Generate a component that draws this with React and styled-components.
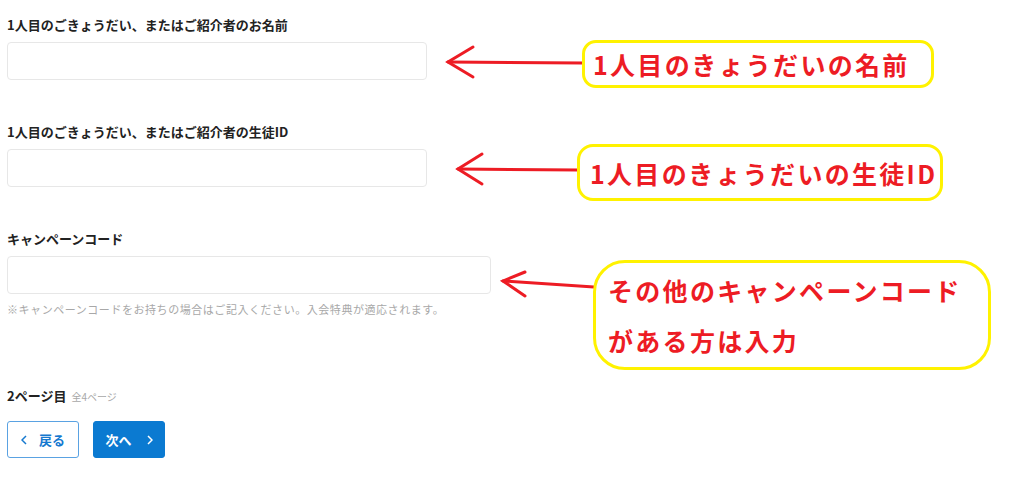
import React from 'react';
import styled, { createGlobalStyle } from 'styled-components';

const GlobalStyle = createGlobalStyle`
  html, body {
    margin: 0;
    padding: 0;
    background: #fff;
  }
  body {
    font-family: "Noto Sans CJK JP", "Noto Sans", sans-serif;
    color: #222;
  }
`;

const Page = styled.div`
  position: relative;
  width: 1024px;
  height: 481px;
  box-sizing: border-box;
  padding: 15px 0 0 7px;
  overflow: hidden;
`;

const Form = styled.form`
  display: flex;
  flex-direction: column;
  align-items: flex-start;
`;

const Field = styled.div`
  display: flex;
  flex-direction: column;
  margin-bottom: ${p => p.$gap ?? 42}px;
`;

const Label = styled.label`
  font-size: 13px;
  font-weight: 700;
  line-height: 20px;
  color: #222;
  margin-bottom: 7px;
`;

const Input = styled.input`
  width: ${p => p.$w}px;
  height: 38px;
  box-sizing: border-box;
  border: 1px solid #e7e7e7;
  border-radius: 4px;
  background: #fff;
  outline: none;
  padding: 0 10px;
`;

const Help = styled.p`
  margin: 7px 0 0;
  font-size: 11px;
  letter-spacing: 0.55px;
  line-height: 16px;
  color: #a8a8a8;
`;

const PageInfo = styled.div`
  margin-top: 69px;
  display: flex;
  align-items: baseline;
  gap: 5px;
`;

const PageNow = styled.span`
  font-size: 13px;
  font-weight: 700;
  color: #222;
  line-height: 20px;
`;

const PageAll = styled.span`
  font-size: 10px;
  color: #a8a8a8;
`;

const ButtonRow = styled.div`
  display: flex;
  gap: 14px;
  margin-top: 15px;
`;

const NavButton = styled.button`
  width: 72px;
  height: 37px;
  box-sizing: border-box;
  border-radius: 3px;
  border: 1px solid ${p => (p.$primary ? '#0b7ad1' : '#5aa2e2')};
  background: ${p => (p.$primary ? '#0b7ad1' : '#fff')};
  color: ${p => (p.$primary ? '#fff' : '#1679cf')};
  font-family: inherit;
  font-size: 13px;
  font-weight: 700;
  display: flex;
  align-items: center;
  justify-content: center;
  gap: ${p => (p.$primary ? 15 : 12)}px;
  padding: 0;
  cursor: pointer;
`;

const Chevron = ({ dir }) => (
  <svg width="6" height="10" viewBox="0 0 6 10">
    <path
      d={dir === 'left' ? 'M5 1 L1 5 L5 9' : 'M1 1 L5 5 L1 9'}
      fill="none"
      stroke="currentColor"
      strokeWidth="1.5"
    />
  </svg>
);

/* annotations drawn over the form */
const Overlay = styled.div`
  position: absolute;
  inset: 0;
  pointer-events: none;
`;

const Arrows = styled.svg`
  position: absolute;
  left: 0;
  top: 0;
`;

const Callout = styled.div`
  position: absolute;
  left: ${p => p.$x}px;
  top: ${p => p.$y}px;
  width: ${p => p.$w}px;
  height: ${p => p.$h}px;
  box-sizing: border-box;
  border: 3px solid #fff200;
  border-radius: ${p => p.$r}px;
  padding-left: ${p => p.$pad}px;
  display: flex;
  flex-direction: column;
  justify-content: center;
  color: #ed1c24;
  font-size: 25px;
  font-weight: 700;
  letter-spacing: 2.3px;
  line-height: ${p => p.$lh || 30}px;
  white-space: nowrap;
`;

const arrows = [
  { tip: [448, 62], end: [583, 63], up: [473, 47], down: [473, 77] },
  { tip: [458, 169], end: [578, 170], up: [482, 154], down: [482, 184] },
  { tip: [503, 281], end: [594, 287], up: [525, 272], down: [525, 296] },
];

export default function App() {
  return (
    <Page>
      <GlobalStyle />
      <Form onSubmit={e => e.preventDefault()}>
        <Field>
          <Label>1人目のごきょうだい、またはご紹介者のお名前</Label>
          <Input $w={420} />
        </Field>
        <Field>
          <Label>1人目のごきょうだい、またはご紹介者の生徒ID</Label>
          <Input $w={420} />
        </Field>
        <Field $gap={0}>
          <Label>キャンペーンコード</Label>
          <Input $w={484} />
          <Help>※キャンペーンコードをお持ちの場合はご記入ください。入会特典が適応されます。</Help>
        </Field>
        <PageInfo>
          <PageNow>2ページ目</PageNow>
          <PageAll>全4ページ</PageAll>
        </PageInfo>
        <ButtonRow>
          <NavButton type="button">
            <Chevron dir="left" />
            戻る
          </NavButton>
          <NavButton type="button" $primary>
            次へ
            <Chevron dir="right" />
          </NavButton>
        </ButtonRow>
      </Form>

      <Overlay>
        <Arrows width="1024" height="481">
          {arrows.map((a, i) => (
            <g key={i} stroke="#ed1c24" strokeWidth="3" strokeLinecap="round" fill="none">
              <line x1={a.tip[0]} y1={a.tip[1]} x2={a.end[0]} y2={a.end[1]} />
              <polyline points={`${a.up.join(',')} ${a.tip.join(',')} ${a.down.join(',')}`} />
            </g>
          ))}
        </Arrows>
        <Callout $x={582} $y={40} $w={352} $h={48} $r={14} $pad={8}>
          1人目のきょうだいの名前
        </Callout>
        <Callout $x={577} $y={144} $w={366} $h={57} $r={16} $pad={10}>
          1人目のきょうだいの生徒ID
        </Callout>
        <Callout $x={593} $y={260} $w={398} $h={110} $r={32} $pad={12} $lh={50}>
          <span>その他のキャンペーンコード</span>
          <span>がある方は入力</span>
        </Callout>
      </Overlay>
    </Page>
  );
}
